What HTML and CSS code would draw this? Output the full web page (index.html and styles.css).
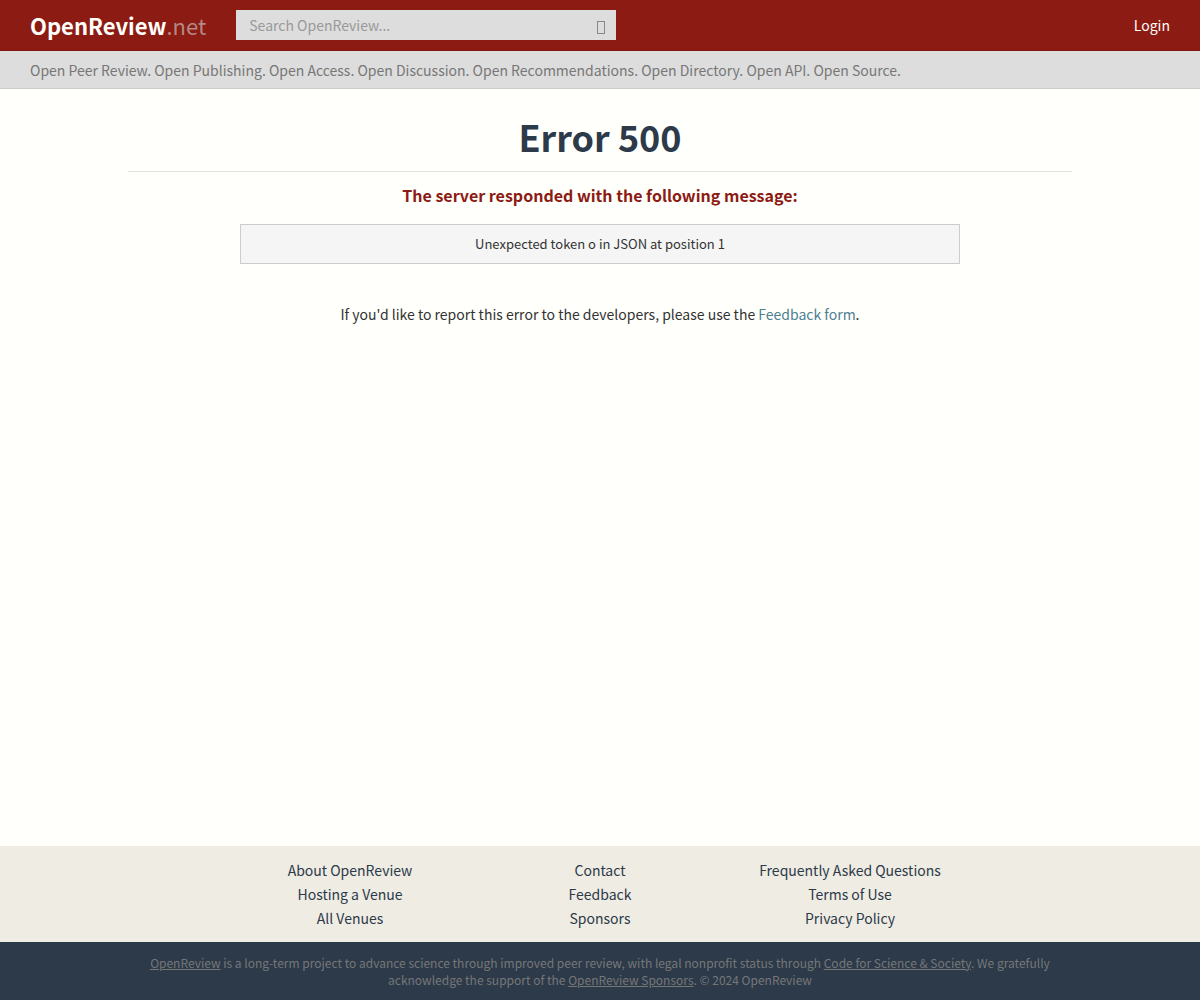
FILE: index.html
```
<!DOCTYPE html>
<html lang="en">
<head>
<meta charset="utf-8">
<meta name="viewport" content="width=device-width, initial-scale=1">
<title>Error 500 | OpenReview</title>
<link rel="stylesheet" href="styles.css">
</head>
<body>
<nav class="navbar">
  <a class="brand" href="/"><strong>OpenReview</strong>.net</a>
  <form class="search" role="search">
    <input class="search-input" type="text" placeholder="Search OpenReview..." aria-label="Search OpenReview">
    <svg class="search-icon" viewBox="0 0 8 14" aria-hidden="true"><rect x="0.5" y="0.5" width="7" height="12"/></svg>
  </form>
  <a class="login" href="/login">Login</a>
</nav>
<div class="banner">Open Peer Review. Open Publishing. Open Access. Open Discussion. Open Recommendations. Open Directory. Open API. Open Source.</div>
<main class="content">
  <header class="error-header"><h1>Error 500</h1></header>
  <h2 class="error-lead">The server responded with the following message:</h2>
  <pre class="error-message">Unexpected token o in JSON at position 1</pre>
  <p class="report">If you'd like to report this error to the developers, please use the <a href="/feedback">Feedback form</a>.</p>
</main>
<footer class="sitemap">
  <ul class="sitemap-column">
    <li><a href="/about">About OpenReview</a></li>
    <li><a href="/group">Hosting a Venue</a></li>
    <li><a href="/venues">All Venues</a></li>
  </ul>
  <ul class="sitemap-column">
    <li><a href="/contact">Contact</a></li>
    <li><a href="/feedback">Feedback</a></li>
    <li><a href="/sponsors">Sponsors</a></li>
  </ul>
  <ul class="sitemap-column">
    <li><a href="/faq">Frequently Asked Questions</a></li>
    <li><a href="/legal/terms">Terms of Use</a></li>
    <li><a href="/legal/privacy">Privacy Policy</a></li>
  </ul>
</footer>
<div class="sponsor">
  <p><a href="/about">OpenReview</a> is a long-term project to advance science through improved peer review, with legal nonprofit status through <a href="/codeforscience">Code for Science &amp; Society</a>. We gratefully acknowledge the support of the <a href="/sponsors">OpenReview Sponsors</a>. © 2024 OpenReview</p>
</div>
</body>
</html>
```

FILE: styles.css
```
* {
  box-sizing: border-box;
}

body {
  display: flex;
  flex-direction: column;
  min-height: 100vh;
  margin: 0;
  background: #fffffb;
  color: #333;
  font: 14px/24px "Noto Sans CJK SC", sans-serif;
}

a {
  color: #4d8093;
  text-decoration: none;
}

.navbar {
  display: flex;
  align-items: center;
  height: 51px;
  padding: 0 30px;
  border-bottom: 1px solid #7c1a10;
  background: #8c1b13;
}

.brand {
  margin-right: 30px;
  color: #b38a86;
  font-size: 22px;
}

.brand strong {
  color: #fffffb;
}

.search {
  position: relative;
  flex: 0 1 380px;
}

.search-input {
  display: block;
  width: 100%;
  height: 30px;
  padding: 0 32px 0 13px;
  border: 0;
  border-radius: 0;
  background: #ddd;
  color: #333;
  font: inherit;
}

.search-input::placeholder {
  color: #999;
}

.search-icon {
  position: absolute;
  top: 11px;
  right: 11px;
  width: 8px;
  height: 14px;
  fill: none;
  stroke: #888;
}

.login {
  margin-left: auto;
  color: #fffffb;
}

.banner {
  padding: 7px 30px 6px;
  border-bottom: 1px solid #ccc;
  background: #ddd;
  color: #777;
}

.content {
  flex: 1;
  width: 100%;
  max-width: 974px;
  margin: 0 auto;
  padding: 27px 15px 0;
  text-align: center;
}

.error-header {
  padding-bottom: 15px;
  border-bottom: 1px solid #e0e0dc;
}

.error-header h1 {
  margin: 0;
  color: #2c3a4a;
  font-size: 36px;
  line-height: 40px;
}

.error-lead {
  margin: 11px 0 17px;
  color: #8c1b13;
  font-size: 16px;
  line-height: 24px;
}

.error-message {
  max-width: 720px;
  margin: 0 auto 38px;
  padding: 9px;
  border: 1px solid #ccc;
  background: #f5f5f5;
  font: 13px/20px "Noto Sans CJK SC", sans-serif;
  white-space: pre-wrap;
}

.report {
  margin: 0;
}

.sitemap {
  display: flex;
  justify-content: center;
  padding: 12px 15px;
  background: #efece3;
}

.sitemap-column {
  flex: 0 1 250px;
  margin: 0;
  padding: 0;
  list-style: none;
  text-align: center;
}

.sitemap-column a {
  color: #2c3a4a;
}

.sponsor {
  padding: 12px 15px;
  background: #2c3a4a;
  color: #777;
  font-size: 12px;
  line-height: 17px;
  text-align: center;
}

.sponsor p {
  max-width: 940px;
  margin: 0 auto;
}

.sponsor a {
  color: inherit;
  text-decoration: underline;
}
```
